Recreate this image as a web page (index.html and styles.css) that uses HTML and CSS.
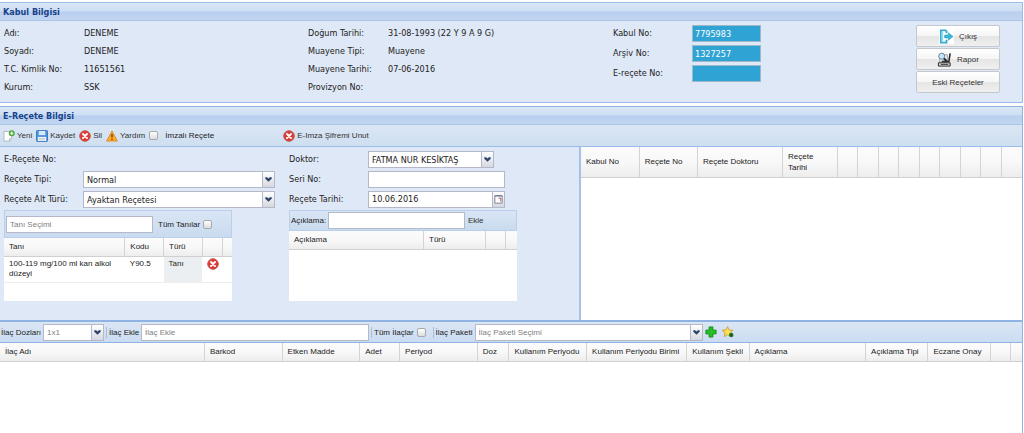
FILE: index.html
```html
<!DOCTYPE html>
<html lang="tr">
<head>
<meta charset="utf-8">
<title>E-Reçete</title>
<link rel="stylesheet" href="styles.css">
</head>
<body>
<svg class="defs" aria-hidden="true">
  <symbol id="chevron" viewBox="0 0 12 15"><path d="M2.500 5h2L6 6.500 7.500 5h2v1.800L6 10 2.500 6.800z" fill="#2f4468"/></symbol>
  <symbol id="cancel" viewBox="0 0 12 12"><circle cx="6" cy="6" r="5.300" fill="#dc3a34" stroke="#c25a55"/><path d="M4 4l4 4M8 4L4 8" stroke="#fff" stroke-width="1.900" stroke-linecap="round"/></symbol>
</svg>
<main class="page">
  <section class="panel">
    <h2 class="panel-title">Kabul Bilgisi</h2>
    <div class="patient">
      <dl class="facts">
        <dt>Adı:</dt><dd>DENEME</dd>
        <dt>Soyadı:</dt><dd>DENEME</dd>
        <dt>T.C. Kimlik No:</dt><dd>11651561</dd>
        <dt>Kurum:</dt><dd>SSK</dd>
      </dl>
      <dl class="facts">
        <dt>Doğum Tarihi:</dt><dd>31-08-1993 (22 Y 9 A 9 G)</dd>
        <dt>Muayene Tipi:</dt><dd>Muayene</dd>
        <dt>Muayene Tarihi:</dt><dd>07-06-2016</dd>
        <dt>Provizyon No:</dt><dd></dd>
      </dl>
      <div class="numbers">
        <label for="kabul">Kabul No:</label><input class="num" id="kabul" value="7795983" readonly>
        <label for="arsiv">Arşiv No:</label><input class="num" id="arsiv" value="1327257" readonly>
        <label for="erecete">E-reçete No:</label><input class="num" id="erecete" value="" readonly>
      </div>
      <div class="actions">
        <button class="action" type="button"><svg class="icon-lg" viewBox="0 0 16 16"><rect width="16" height="16" fill="#fff"/><path d="M8 1.500H2v13h6v-3M8 1.500v3" fill="none" stroke="#35a9cf" stroke-width="2"/><path d="M3.500 3v10" stroke="#8bdcec" stroke-width="2"/><path d="M6 6.500h4V4l5 4-5 4V9.500H6z" fill="#3db8d8" stroke="#2a9abd" stroke-width=".6"/></svg>Çıkış</button>
        <button class="action" type="button"><svg class="icon-lg" viewBox="0 0 16 16"><path d="M3 3h8v8H3z" fill="#e9eef2" stroke="#888" stroke-width=".8"/><path d="M14 1.500L12.500 11" stroke="#222" stroke-width="1.600"/><path d="M5 10h7" stroke="#333" stroke-width="1.500"/><circle cx="5" cy="4.500" r="3.200" fill="#c8e5f5" stroke="#5d83a1"/><path d="M7.300 7l3 2.500" stroke="#222" stroke-width="2"/><path d="M1.500 11.500h12.500v3.500H1.500z" fill="#ddd" stroke="#222"/><path d="M4 13.200h8" stroke="#333"/></svg>Rapor</button>
        <button class="action" type="button">Eski Reçeteler</button>
      </div>
    </div>
  </section>

  <section class="panel panel-main">
    <h2 class="panel-title">E-Reçete Bilgisi</h2>
    <div class="toolbar">
      <button class="tool" type="button"><svg class="icon" viewBox="0 0 13 13"><path d="M1 1.500h8.500v8L7 12H1z" fill="#fff" stroke="#aeb7bd"/><path d="M7 12V9.500h2.500" fill="#ddd" stroke="#aeb7bd"/><circle cx="9.500" cy="3.500" r="3.200" fill="#43a733"/><path d="M9.500 1.700v3.600M7.700 3.500h3.600" stroke="#fff" stroke-width="1.300"/></svg>Yeni</button>
      <button class="tool" type="button"><svg class="icon" viewBox="0 0 13 13"><rect x=".5" y=".5" width="12" height="12" rx="1" fill="#4f94dc" stroke="#3475bd"/><path d="M3 1h7v4.500H3z" fill="#d7e9fa"/><path d="M2 7.500h9V12H2z" fill="#f4f7fa"/><path d="M3 9h7M3 10.700h7" stroke="#a4b6c7" stroke-width=".7"/></svg>Kaydet</button>
      <button class="tool" type="button"><svg class="icon"><use href="#cancel"/></svg>Sil</button>
      <button class="tool" type="button"><svg class="icon" viewBox="0 0 13 13"><path d="M6.500 1L12.300 12H.7z" fill="#ffab2e" stroke="#e28a22" stroke-linejoin="round"/><path d="M6.500 4.200v4" stroke="#5b3b12" stroke-width="1.500"/><circle cx="6.500" cy="10" r=".9" fill="#5b3b12"/></svg>Yardım</button>
      <label class="check signed"><input class="box" type="checkbox">İmzalı Reçete</label>
      <button class="tool forgot" type="button"><svg class="icon"><use href="#cancel"/></svg>E-Imza Şifremi Unut</button>
    </div>

    <div class="workspace">
      <div class="form">
        <div class="form-col">
          <div class="fields">
            <span>E-Reçete No:</span><span></span>
            <label for="tip">Reçete Tipi:</label>
            <span class="combo"><select id="tip"><option>Normal</option></select><span class="trigger"><svg><use href="#chevron"/></svg></span></span>
            <label for="alt">Reçete Alt Türü:</label>
            <span class="combo"><select id="alt"><option>Ayaktan Reçetesi</option></select><span class="trigger"><svg><use href="#chevron"/></svg></span></span>
          </div>
          <div class="card">
            <div class="card-bar card-bar-tall">
              <input class="field diag-search" aria-label="Tanı Seçimi" placeholder="Tanı Seçimi">
              <label class="check after">Tüm Tanılar<input class="box" type="checkbox"></label>
            </div>
            <table class="grid diag">
              <colgroup><col class="w-53"><col class="w-17"><col class="w-17"><col class="w-9"><col></colgroup>
              <thead><tr><th>Tanı</th><th>Kodu</th><th>Türü</th><th></th><th></th></tr></thead>
              <tbody><tr><td>100-119 mg/100 ml kan alkol düzeyi</td><td>Y90.5</td><td class="shade">Tanı</td><td class="del"><button class="tool" type="button" aria-label="Sil"><svg class="icon"><use href="#cancel"/></svg></button></td><td></td></tr></tbody>
            </table>
          </div>
        </div>
        <div class="form-col form-col-second">
          <div class="fields">
            <label for="doktor">Doktor:</label>
            <span class="combo combo-short"><select id="doktor"><option>FATMA NUR KESİKTAŞ</option></select><span class="trigger"><svg><use href="#chevron"/></svg></span></span>
            <label for="seri">Seri No:</label>
            <input class="field medium" id="seri">
            <label for="tarih">Reçete Tarihi:</label>
            <span class="combo medium"><input class="field" id="tarih" value="10.06.2016"><span class="trigger"><svg viewBox="0 0 12 15"><path d="M2 3.500h8v8H2z" fill="#fff" stroke="#777d8b"/><path d="M6 6h2.500v3.500" fill="none" stroke="#a35151"/><path d="M2 3.500h8" stroke="#59657b"/></svg></span></span>
          </div>
          <div class="card">
            <div class="card-bar">
              <label class="lab-note" for="aciklama">Açıklama:</label><input class="field note" id="aciklama">
              <button class="tool" type="button">Ekle</button>
            </div>
            <table class="grid notes">
              <colgroup><col class="w-59"><col class="w-27"><col class="w-9"><col></colgroup>
              <thead><tr><th>Açıklama</th><th>Türü</th><th></th><th></th></tr></thead>
            </table>
          </div>
        </div>
      </div>
      <div class="history">
        <table class="grid past">
          <colgroup><col class="c-58"><col class="c-58"><col class="c-85"><col class="c-55"><col><col><col><col><col><col><col><col><col></colgroup>
          <thead><tr><th>Kabul No</th><th>Reçete No</th><th>Reçete Doktoru</th><th>Reçete<br>Tarihi</th><th></th><th></th><th></th><th></th><th></th><th></th><th></th><th></th><th></th></tr></thead>
        </table>
      </div>
    </div>

    <div class="drugbar">
      <label class="lab-dose" for="doz">İlaç Dozları</label>
      <span class="combo dose muted"><select id="doz"><option>1x1</option></select><span class="trigger"><svg><use href="#chevron"/></svg></span></span>
      <span class="sep"></span>
      <label class="lab-add" for="ilac">İlaç Ekle</label>
      <input class="field wide" id="ilac" placeholder="İlaç Ekle">
      <span class="sep"></span>
      <label class="check after">Tüm İlaçlar<input class="box" type="checkbox"></label>
      <span class="sep sep-late"></span>
      <label class="lab-pack" for="paket">İlaç Paketi</label>
      <span class="combo wide muted"><select id="paket"><option>İlaç Paketi Seçimi</option></select><span class="trigger"><svg><use href="#chevron"/></svg></span></span>
      <button class="tool" type="button" aria-label="Ekle"><svg class="icon" viewBox="0 0 13 13"><path d="M4.500 1h4v3.500H12v4H8.500V12h-4V8.500H1v-4h3.500z" fill="#21c321" stroke="#128512"/></svg></button>
      <button class="tool" type="button" aria-label="Favorilere ekle"><svg class="icon" viewBox="0 0 13 13"><path d="M6 .7l1.700 3.600 4 .4-3 2.700.9 4L6 9.500l-3.500 1.900.8-4-3-2.700 4-.4z" fill="#ffe24e" stroke="#c3902a" stroke-width=".8"/><circle cx="10" cy="9.700" r="2.500" fill="#267b25"/><path d="M10 8.300v2.800M8.600 9.700h2.800" stroke="#164f17" stroke-width=".8"/></svg></button>
    </div>
    <table class="grid drugs">
      <colgroup><col class="d-1"><col class="d-2"><col class="d-2"><col class="d-3"><col class="d-2"><col class="d-4"><col class="d-2"><col class="d-5"><col class="d-6"><col class="d-7"><col class="d-6"><col class="d-6"><col class="d-8"><col></colgroup>
      <thead><tr><th>İlaç Adı</th><th>Barkod</th><th>Etken Madde</th><th>Adet</th><th>Periyod</th><th>Doz</th><th>Kullanım Periyodu</th><th>Kullanım Periyodu Birimi</th><th>Kullanım Şekli</th><th>Açıklama</th><th>Açıklama Tipi</th><th>Eczane Onay</th><th></th><th></th></tr></thead>
    </table>
  </section>
</main>
</body>
</html>
```
FILE: styles.css
```css
* { box-sizing: border-box; }
body { margin: 0; background: #fff; color: #222; font-family: "Liberation Sans", Arial, sans-serif; font-size: 8px; line-height: 11px; }
.defs { position: absolute; width: 0; height: 0; }
button, input, select { font: inherit; color: inherit; margin: 0; }
input::placeholder { color: #808080; opacity: 1; }
.page { display: flex; flex-direction: column; gap: 3px; min-height: 100vh; padding: 2px 1px 0 0; }
.panel { border: 1px solid #99bce8; border-left: 0; }
.panel-main { flex: 1; display: flex; flex-direction: column; border-bottom: 0; border-color: #8fb3e3; }
.panel-title { margin: 0; height: 18px; padding: 0 3px; border-bottom: 1px solid #a9c5ea; background: linear-gradient(#dae7f6, #cddef3 48%, #b8cff0 52%, #c3d6ef); color: #15428b; font: bold 9px/18px "DejaVu Sans Condensed", Tahoma, sans-serif; }

.patient { display: grid; grid-template-columns: 304fr 305fr 303fr 106fr; padding: 3px 0 6px 4px; background: #dfe8f6; font-family: "DejaVu Sans Condensed", Tahoma, sans-serif; font-size: 9px; line-height: 18px; }
.facts { display: grid; grid-template-columns: 80px 1fr; align-content: start; margin: 0; }
.facts dd { margin: 0; }
.numbers { display: grid; grid-template-columns: 79px 69px; row-gap: 3px; align-content: start; padding-top: 1px; }
.numbers label { line-height: 17px; }
.num { height: 17px; width: 69px; padding: 0 2px; border: 1px solid #9fb9c9; background: #2fa4d4; color: #fff; }
.actions { display: flex; flex-direction: column; gap: 1px; width: 84px; padding-top: 1px; }
.action { display: flex; align-items: center; justify-content: center; gap: 5px; height: 22px; padding: 0; border: 1px solid #c4c8cd; border-radius: 2px; background: linear-gradient(#fff, #f6f6f6 48%, #e5e5e5 52%, #f0f0f0); color: #333; font: 8px "Liberation Sans", Arial, sans-serif; }
.icon-lg { width: 15px; height: 15px; }

.toolbar { display: flex; align-items: center; gap: 4px; height: 22px; padding-left: 3px; border-bottom: 1px solid #99bce8; background: linear-gradient(#dbe6f4, #cedff0); }
.tool { display: flex; align-items: center; gap: 2px; padding: 0; border: 0; background: none; color: #333; }
.icon { width: 12px; height: 12px; flex: none; }
.check { display: flex; align-items: center; white-space: nowrap; }
.after { gap: 3px; }
.box { appearance: none; width: 9px; height: 9px; border: 1px solid #a5a9ad; border-radius: 2px; background: linear-gradient(#fff, #ddd); }
.signed { gap: 7px; }
.forgot { margin-left: 65px; }

.workspace { display: grid; grid-template-columns: 581fr 441fr; height: 175px; border-bottom: 2px solid #8fb3e3; }
.form { display: flex; gap: 14px; padding: 4px; background: #dfe8f6; border-right: 2px solid #a4c1e9; }
.form-col { width: 271px; }
.form-col-second { width: 228px; }
.fields { display: grid; grid-template-columns: 79px 1fr; grid-auto-rows: 17px; row-gap: 3px; align-items: center; font-family: "DejaVu Sans Condensed", Tahoma, sans-serif; font-size: 9px; line-height: 17px; }
.field, select { appearance: none; height: 17px; min-width: 0; width: 100%; padding: 0 3px; border: 1px solid #b5b8c8; border-radius: 0; background: #fff; color: #222; }
.combo { display: grid; }
.combo > * { grid-area: 1 / 1; }
.trigger { justify-self: end; width: 13px; height: 17px; border: 1px solid #b5b8c8; background: linear-gradient(#fff, #d5d8df); pointer-events: none; }
.trigger svg { display: block; width: 11px; height: 15px; }
.combo-short { width: 126px; }
.medium { width: 137px; }
.card { width: 228px; min-height: 91px; margin-top: 2px; background: #fff; }
.card-bar { display: flex; align-items: center; height: 21px; padding-left: 1px; border: 1px solid #b9cfec; background: linear-gradient(#d9e5f4, #c9dbef); }
.card-bar-tall { height: 28px; gap: 5px; }
.diag-search { width: 147px; }
.lab-note { width: 37px; }
.note { width: 137px; margin-right: 3px; }

.grid { width: 100%; table-layout: fixed; border-collapse: collapse; background: #fff; }
.grid th { height: 18px; padding: 0 0 0 5px; border-right: 1px solid #d4d4d4; border-bottom: 1px solid #d0d0d0; background: linear-gradient(#fbfbfb, #f8f8f8 50%, #ededee); font-weight: normal; text-align: left; white-space: nowrap; }
.grid th:last-child { border-right: 0; }
.grid td { height: 26px; padding: 2px 5px; border-bottom: 1px solid #ededed; vertical-align: top; line-height: 10px; }
.grid .shade { background: #eceff1; }
.grid .del { padding: 1px 5px; }
.w-53 { width: 53%; } .w-59 { width: 59%; } .w-17 { width: 17%; } .w-27 { width: 27%; } .w-9 { width: 9%; }
.history { background: #fff; }
.past th { height: 30px; }
.c-58 { width: 13.2%; } .c-85 { width: 19.3%; } .c-55 { width: 12.4%; }

.drugbar { display: flex; align-items: center; gap: 2px; height: 21px; padding-left: 1px; border-bottom: 1px solid #8fb3e3; background: linear-gradient(#dbe6f4, #cbdcf2); white-space: nowrap; }
.lab-dose { width: 40px; }
.lab-add { width: 30px; }
.lab-pack { width: 37px; }
.dose { width: 61px; }
.wide { width: 228px; }
.muted select { color: #808080; }
.sep { width: 1px; height: 11px; background: #a9bdd8; }
.sep-late { margin-left: 5px; }
.drugbar .tool + .tool { margin-left: 3px; }
.d-1 { width: 20%; } .d-2 { width: 7.6%; } .d-3 { width: 3.9%; } .d-4 { width: 3.1%; } .d-5 { width: 9.8%; } .d-6 { width: 6.1%; } .d-7 { width: 11.4%; } .d-8 { width: 2%; }
```
